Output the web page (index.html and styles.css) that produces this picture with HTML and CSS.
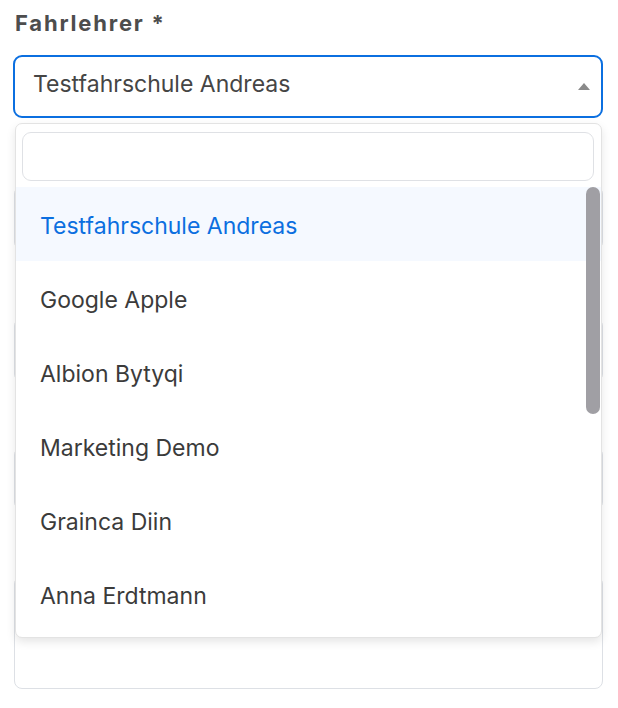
FILE: index.html
```html
<!DOCTYPE html>
<html lang="de">
<head>
<meta charset="utf-8">
<link rel="stylesheet" href="styles.css">
</head>
<body>
<div class="form">
  <div class="group">
    <label class="label">Fahrlehrer *</label>
    <div class="select-wrap">
      <div class="select">
        <span class="select-value">Testfahrschule Andreas</span>
        <svg class="caret" width="12" height="7" viewBox="0 0 12 7"><path d="M0 7 L6 0 L12 7 Z" fill="#8a8a8a"/></svg>
      </div>
      <div class="dropdown">
        <div class="search-row"><input class="search" type="text"></div>
        <ul class="options">
          <li class="option active">Testfahrschule Andreas</li>
          <li class="option">Google Apple</li>
          <li class="option">Albion Bytyqi</li>
          <li class="option">Marketing Demo</li>
          <li class="option">Grainca Diin</li>
          <li class="option">Anna Erdtmann</li>
        </ul>
        <div class="thumb"></div>
      </div>
    </div>
  </div>
  <div class="field f1"></div>
  <div class="field f2"></div>
  <div class="field f3"></div>
  <div class="field area"></div>
</div>
</body>
</html>
```
FILE: styles.css
```css
* { box-sizing: border-box; }
html, body { margin: 0; padding: 0; background: #ffffff; }
body { font-family: Inter, "Open Sans", sans-serif; }
.form { padding: 10px 15px 0 13px; width: 618px; }
.label {
  display: block;
  font-size: 22px;
  line-height: 27px;
  font-weight: 700;
  letter-spacing: 1.8px;
  color: #4d4d4d;
  padding-left: 2px;
  margin-bottom: 18px;
}
.select-wrap { position: relative; }
.select {
  height: 63px;
  border: 2px solid #0b6fe0;
  border-radius: 9px;
  display: flex;
  align-items: center;
  padding: 0 11px 5px 18px;
  justify-content: space-between;
}
.select-value { font-size: 23px; color: #454545; }
.caret { margin-top: 5px; }
.dropdown {
  position: absolute;
  left: 2px;
  right: 1px;
  top: 68px;
  height: 515px;
  background: #fff;
  border: 1px solid #e3e3e3;
  border-radius: 7px;
  box-shadow: 0 4px 10px rgba(0,0,0,0.10);
  z-index: 5;
  display: flex;
  flex-direction: column;
  overflow: hidden;
}
.search-row { padding: 8px 7px 6px 6px; }
.search {
  display: block;
  width: 100%;
  height: 49px;
  border: 1.5px solid #dfe1e5;
  border-radius: 9px;
  outline: none;
  background: #fff;
}
.options {
  list-style: none;
  margin: 0;
  padding: 0;
  flex: 1;
  overflow: hidden;
}
.thumb {
  position: absolute;
  right: 1px;
  top: 63px;
  width: 14px;
  height: 227px;
  border-radius: 7px;
  background: #a09fa4;
}
.option {
  height: 74px;
  display: flex;
  align-items: center;
  padding: 3px 0 0 24px;
  font-size: 23px;
  color: #3b3b3b;
}
.option.active { background: #f5f9ff; color: #0b6fe0; }
.field {
  margin-left: 1px;
  border: 1px solid #dde0e5;
  border-radius: 8px;
  height: 64px;
}
.f1 { margin-top: 68px; }
.f2 { margin-top: 68px; }
.f3 { margin-top: 65px; height: 63px; }
.area { margin-top: 66px; height: 113px; }
```
